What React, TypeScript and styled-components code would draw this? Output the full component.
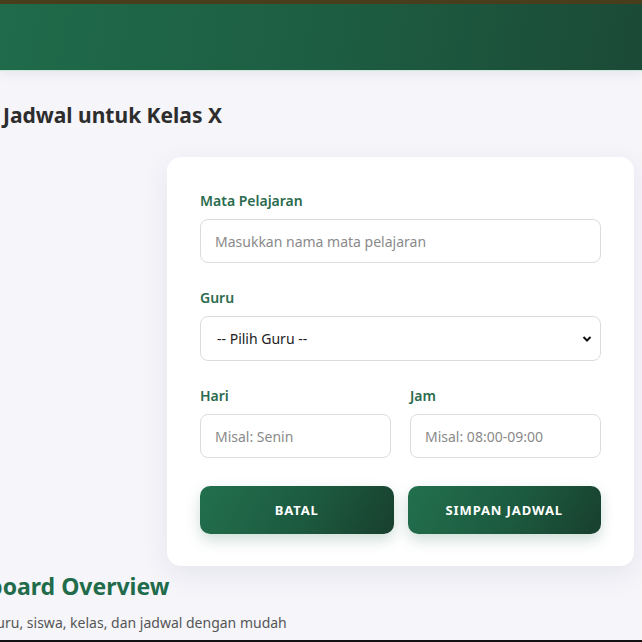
import React from 'react';
import styled, {createGlobalStyle} from 'styled-components';

const GlobalStyle = createGlobalStyle`
  html, body {
    margin: 0;
    padding: 0;
    background: #f5f5fa;
    overflow: hidden;
  }
  body {
    font-family: "Noto Sans", "Open Sans", sans-serif;
    color: #333;
  }
  * {
    box-sizing: border-box;
  }
`;

const Page = styled.div`
  width: 642px;
  height: 642px;
  display: flex;
  flex-direction: column;
  overflow: hidden;
  border-bottom: 2px solid #111;
`;

const TopStrip = styled.div`
  height: 4px;
  background: #4a3f1c;
`;

const Header = styled.header`
  height: 67px;
  background: linear-gradient(100deg, #1f6b4a 0%, #1d5e42 50%, #1b4a37 100%);
  border-bottom: 1px solid #cfe8dc;
  box-shadow: 0 4px 10px rgba(20, 40, 30, 0.06);
`;

const Main = styled.main`
  flex: 1;
  display: flex;
  flex-direction: column;
  padding: 31px 8px 0 3px;
`;

const Title = styled.h2`
  margin: 0;
  font-size: 21px;
  font-weight: 700;
  line-height: 26px;
  color: #2d2d2d;
`;

const Card = styled.div`
  margin: 29px 0 0 164px;
  width: 467px;
  background: #fff;
  border-radius: 14px;
  padding: 33px 33px 32px 33px;
  box-shadow: 0 8px 28px rgba(40, 40, 80, 0.08);
  display: flex;
  flex-direction: column;
  gap: 24px;
`;

const Field = styled.div`
  display: flex;
  flex-direction: column;
  gap: 8px;
  min-width: 0;
`;

const Row = styled.div<{ $gap: number }>`
  display: grid;
  grid-template-columns: 1fr 1fr;
  column-gap: ${p => p.$gap}px;
`;

const Label = styled.label`
  font-size: 14px;
  font-weight: 600;
  line-height: 21px;
  color: #2b6b4e;
`;

const Input = styled.input`
  height: 44px;
  width: 100%;
  border: 1px solid #dcdce0;
  border-radius: 8px;
  padding: 0 14px;
  font-family: inherit;
  font-size: 14px;
  color: #222;
  background: #fff;
  outline: none;

  &::placeholder {
    color: #8a8a8a;
  }
`;

const SelectWrap = styled.div`
  position: relative;
`;

const Select = styled.select`
  appearance: none;
  height: 45px;
  width: 100%;
  border: 1px solid #dcdce0;
  border-radius: 8px;
  padding: 0 16px;
  font-family: inherit;
  font-size: 14px;
  color: #222;
  background: #fff;
  outline: none;
`;

const Chevron = styled.svg`
  position: absolute;
  right: 9px;
  top: 19px;
  pointer-events: none;
`;

const Buttons = styled(Row)`
  margin-top: 4px;
`;

const Button = styled.button`
  height: 48px;
  border: none;
  border-radius: 10px;
  background: linear-gradient(120deg, #22704d 0%, #1c5a3f 55%, #183f2e 100%);
  color: #fff;
  font-family: inherit;
  font-size: 13px;
  font-weight: 700;
  letter-spacing: 0.9px;
  text-transform: uppercase;
  box-shadow: 0 6px 14px rgba(31, 107, 72, 0.22);
  cursor: pointer;
`;

const Overview = styled.section`
  margin: 4px 0 0 -72px;
  display: flex;
  flex-direction: column;
  gap: 11px;
`;

const OverviewTitle = styled.h1`
  margin: 0;
  font-size: 23px;
  font-weight: 700;
  line-height: 32px;
  color: #1f6b4a;
`;

const OverviewText = styled.p`
  margin: 0 0 0 -20px;
  font-size: 14px;
  line-height: 20px;
  color: #555;
`;

export default function App() {
  return (
    <>
      <GlobalStyle />
      <Page>
        <TopStrip />
        <Header />
        <Main>
          <Title>Jadwal untuk Kelas X</Title>
          <Card>
            <Field>
              <Label>Mata Pelajaran</Label>
              <Input placeholder="Masukkan nama mata pelajaran" />
            </Field>
            <Field>
              <Label>Guru</Label>
              <SelectWrap>
                <Select defaultValue="">
                  <option value="">-- Pilih Guru --</option>
                </Select>
                <Chevron width="10" height="8" viewBox="0 0 10 8">
                  <path d="M1.5 2 L5 5.5 L8.5 2" fill="none" stroke="#111" strokeWidth="2" />
                </Chevron>
              </SelectWrap>
            </Field>
            <Row $gap={19}>
              <Field>
                <Label>Hari</Label>
                <Input placeholder="Misal: Senin" />
              </Field>
              <Field>
                <Label>Jam</Label>
                <Input placeholder="Misal: 08:00-09:00" />
              </Field>
            </Row>
            <Buttons $gap={14}>
              <Button>Batal</Button>
              <Button>Simpan Jadwal</Button>
            </Buttons>
          </Card>
          <Overview>
            <OverviewTitle>Dashboard Overview</OverviewTitle>
            <OverviewText>Kelola data guru, siswa, kelas, dan jadwal dengan mudah</OverviewText>
          </Overview>
        </Main>
      </Page>
    </>
  );
}
